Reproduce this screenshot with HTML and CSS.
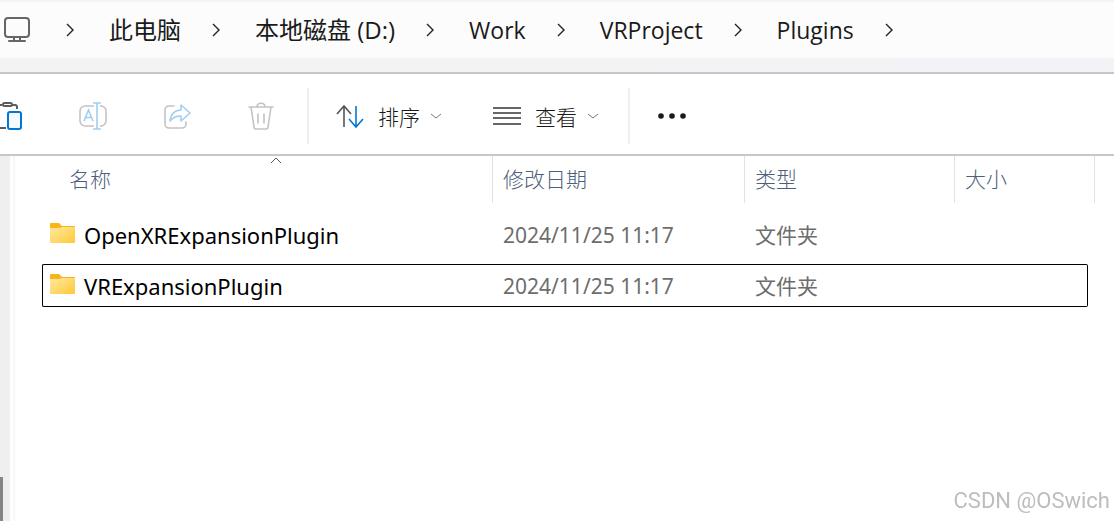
FILE: index.html
```html
<!DOCTYPE html>
<html lang="zh-CN">
<head>
    <meta charset="UTF-8">
    <meta name="viewport" content="width=device-width, initial-scale=1.0">
    <title>Plugins</title>
    <link rel="stylesheet" href="styles.css">
</head>
<body>
    <header>
        <nav class="breadcrumb" aria-label="Path">
            <svg class="pc" viewBox="0 0 28 28" fill="none" stroke="#666" stroke-width="2" stroke-linecap="round">
                <rect x="1" y="2" width="24" height="19" rx="3"/>
                <path d="M10 22v3M16 22v3M5 25h16"/>
            </svg>
            <svg class="sep" viewBox="0 0 8 14"><path d="M1 1l6 6-6 6"/></svg>
            <a href="#">此电脑</a>
            <svg class="sep" viewBox="0 0 8 14"><path d="M1 1l6 6-6 6"/></svg>
            <a href="#">本地磁盘 (D:)</a>
            <svg class="sep" viewBox="0 0 8 14"><path d="M1 1l6 6-6 6"/></svg>
            <a href="#" class="latin">Work</a>
            <svg class="sep" viewBox="0 0 8 14"><path d="M1 1l6 6-6 6"/></svg>
            <a href="#" class="latin">VRProject</a>
            <svg class="sep" viewBox="0 0 8 14"><path d="M1 1l6 6-6 6"/></svg>
            <a href="#" class="latin">Plugins</a>
            <svg class="sep" viewBox="0 0 8 14"><path d="M1 1l6 6-6 6"/></svg>
        </nav>
    </header>

    <div class="toolbar">
        <div class="actions">
            <button aria-label="粘贴">
                <svg viewBox="0 0 28 28" fill="none" stroke="#5c5c5c" stroke-width="2">
                    <path d="M7 3H3a2 2 0 0 0-2 2v19a2 2 0 0 0 2 2h8M17 3h3q2 0 2 2v2"/>
                    <rect x="8" y="1" width="9" height="3" rx="1.5"/>
                    <rect x="13" y="10" width="13" height="17" rx="2" fill="#f6fafd" stroke="#0078d4"/>
                </svg>
            </button>
            <button aria-label="重命名" disabled>
                <svg viewBox="0 0 28 28" fill="none" stroke="#c3c3c3" stroke-width="1.6">
                    <path d="M15 4H6a5 5 0 0 0-5 5v10a5 5 0 0 0 5 5h9M21 4h1a5 5 0 0 1 5 5v10a5 5 0 0 1-5 5h-1"/>
                    <path stroke="#a0cff2" d="M14 1h8M18 1v26M14 27h8M5 19l4.500-11 4.500 11M6.500 15.500h6"/>
                </svg>
            </button>
            <button aria-label="共享" disabled>
                <svg viewBox="0 0 28 28" fill="none" stroke="#c3c3c3" stroke-width="1.600" stroke-linejoin="round" stroke-linecap="round">
                    <path d="M11 4H6a4 4 0 0 0-4 4v14a4 4 0 0 0 4 4h13a4 4 0 0 0 4-4v-2"/>
                    <path stroke="#a0cff2" d="M18 3l9 8-9 8v-5c-5 0-8 1-11 5 1-7 4-11 11-11z"/>
                </svg>
            </button>
            <button aria-label="删除" disabled>
                <svg viewBox="0 0 28 28" fill="none" stroke="#c3c3c3" stroke-width="1.600" stroke-linecap="round">
                    <path d="M2 5h24M10 5c0-5 8-5 8 0M4 5l3 20a2 2 0 0 0 2 2h10a2 2 0 0 0 2-2l3-20M11 12v9M17 12v9"/>
                </svg>
            </button>
        </div>
        <div class="menus">
            <button class="menu">
                <svg viewBox="0 0 28 28" fill="none" stroke="#555" stroke-width="1.600">
                    <path d="M8 25V4M1 12l7-8 7 8"/>
                    <path stroke="#0078d4" d="M20 4v21M13 17l7 8 7-8"/>
                </svg>
                <span>排序</span>
                <svg class="arrow" viewBox="0 0 10 6"><path d="M0 1l5 4 5-4"/></svg>
            </button>
            <button class="menu">
                <svg viewBox="0 0 28 28" fill="none" stroke="#666" stroke-width="2">
                    <path d="M0 6h28M0 11h28M0 16h28M0 22h28"/>
                </svg>
                <span>查看</span>
                <svg class="arrow" viewBox="0 0 10 6"><path d="M0 1l5 4 5-4"/></svg>
            </button>
        </div>
        <button class="more" aria-label="更多">
            <svg viewBox="0 0 28 28" fill="#1a1a1a">
                <circle cx="3" cy="14" r="2.800"/><circle cx="14" cy="14" r="2.800"/><circle cx="25" cy="14" r="2.800"/>
            </svg>
        </button>
    </div>

    <main>
        <div class="scrollbar"><div class="thumb"></div></div>
        <div class="splitter"></div>
        <div class="files">
            <table>
                <thead>
                    <tr>
                        <th class="name">名称<svg class="sorted" viewBox="0 0 12 7"><path d="M1 6l5-5 5 5"/></svg></th>
                        <th class="date">修改日期</th>
                        <th class="type">类型</th>
                        <th class="size">大小</th>
                    </tr>
                </thead>
                <tbody>
                    <tr>
                        <td>
                            <div class="file">
                                <svg class="folder" viewBox="0 0 25 20">
                                    <path fill="#f9b517" d="M0 1a1 1 0 0 1 1-1h8l3 3h12a1 1 0 0 1 1 1v4H0z"/>
                                    <path fill="url(#folder)" d="M0 5h9l3-1h13v15a1 1 0 0 1-1 1H1a1 1 0 0 1-1-1z"/>
                                    <defs>
                                        <linearGradient id="folder" x1="0" y1="0" x2="1" y2="1">
                                            <stop offset="0" stop-color="#ffe9a0"/>
                                            <stop offset="1" stop-color="#ffc938"/>
                                        </linearGradient>
                                    </defs>
                                </svg>
                                OpenXRExpansionPlugin
                            </div>
                        </td>
                        <td>2024/11/25 11:17</td>
                        <td>文件夹</td>
                        <td></td>
                    </tr>
                    <tr class="focused">
                        <td>
                            <div class="file">
                                <svg class="folder" viewBox="0 0 25 20">
                                    <path fill="#f9b517" d="M0 1a1 1 0 0 1 1-1h8l3 3h12a1 1 0 0 1 1 1v4H0z"/>
                                    <path fill="url(#folder)" d="M0 5h9l3-1h13v15a1 1 0 0 1-1 1H1a1 1 0 0 1-1-1z"/>
                                </svg>
                                VRExpansionPlugin
                            </div>
                        </td>
                        <td>2024/11/25 11:17</td>
                        <td>文件夹</td>
                        <td></td>
                    </tr>
                </tbody>
            </table>
        </div>
    </main>

    <div class="watermark">CSDN @OSwich</div>
</body>
</html>
```

FILE: styles.css
```css
* {
    box-sizing: border-box;
}

body {
    display: flex;
    flex-direction: column;
    min-height: 100vh;
    margin: 0;
    background-color: #fff;
    color: #1a1a1a;
    font-family: "Noto Sans", "Noto Sans CJK SC", sans-serif;
    font-size: 21px;
}

svg {
    display: block;
    flex: none;
}

header {
    padding: 2px 0 14px;
    background: linear-gradient(to right, #f3f3f3 40%, #f2f3f7);
    border-bottom: 2px solid #c8c8cc;
}

.breadcrumb {
    display: flex;
    align-items: center;
    height: 56px;
    padding-left: 4px;
    background-color: #fcfcfc;
    white-space: nowrap;
}

.breadcrumb a {
    margin: 0 31px 0 35px;
    color: #1a1a1a;
    font-family: "Open Sans", "Noto Sans CJK SC", sans-serif;
    font-size: 24px;
    line-height: 36px;
    text-decoration: none;
}

.breadcrumb .latin {
    font-size: 23px;
}

.pc {
    width: 28px;
    height: 28px;
    margin-right: 34px;
}

.sep {
    width: 8px;
    height: 14px;
    fill: none;
    stroke: #222;
    stroke-width: 1.4;
}

.toolbar {
    display: flex;
    align-items: center;
    height: 82px;
    padding-top: 4px;
    border-bottom: 2px solid #c8c8cc;
}

.toolbar button {
    padding: 0;
    background: none;
    border: none;
    color: #1a1a1a;
    font: inherit;
    font-weight: 300;
}

.toolbar button svg {
    width: 28px;
    height: 28px;
}

.actions {
    display: flex;
    gap: 56px;
    margin-left: -5px;
    padding-right: 32px;
}

.menus {
    display: flex;
    align-items: center;
    gap: 52px;
    height: 56px;
    padding: 0 30px 0 27px;
    border-left: 2px solid #efefef;
    border-right: 2px solid #efefef;
}

.menu {
    display: flex;
    align-items: center;
}

.menu span {
    margin: 0 11px 0 14px;
}

.toolbar .menu .arrow {
    width: 10px;
    height: 6px;
    fill: none;
    stroke: #777;
}

.more {
    margin-left: 28px;
}

main {
    display: flex;
    flex: 1;
}

.scrollbar {
    display: flex;
    align-items: flex-end;
    width: 10px;
    background-color: #efefef;
}

.thumb {
    width: 3px;
    height: 12%;
    background-color: #858585;
}

.splitter {
    width: 5px;
    border-right: 2px solid #f7f7f7;
}

.files {
    flex: 1;
    padding: 0 26px 0 27px;
}

table {
    width: 100%;
    margin-top: -8px;
    table-layout: fixed;
    border-spacing: 0 8px;
    line-height: 30px;
}

th {
    position: relative;
    height: 49px;
    padding: 0 11px 4px;
    color: #4c607a;
    font-weight: 300;
    text-align: left;
}

/* column dividers */
th::after {
    content: "";
    position: absolute;
    top: 0;
    right: -1px;
    bottom: 2px;
    border-right: 1px solid #e2e2e2;
}

.name {
    width: 450px;
    padding-left: 27px;
}

.date {
    width: 252px;
}

.type {
    width: 210px;
}

.size::after {
    right: -7px;
}

.sorted {
    position: absolute;
    top: 1px;
    left: 228px;
    width: 12px;
    height: 7px;
    fill: none;
    stroke: #555;
}

td {
    height: 43px;
    padding: 0 11px;
    border: 1px solid transparent;
    border-width: 1px 0;
    color: #6d6d6d;
}

td:first-child {
    padding-left: 7px;
    border-left-width: 1px;
    border-radius: 2px 0 0 2px;
    color: #000;
    font-size: 22px;
}

td:last-child {
    border-right-width: 1px;
    border-radius: 0 2px 2px 0;
}

.focused td {
    border-color: #000;
}

.file {
    display: flex;
    align-items: center;
    gap: 9px;
}

.folder {
    width: 25px;
    height: 20px;
    margin-bottom: 4px;
}

.watermark {
    position: fixed;
    right: 4px;
    bottom: 4px;
    color: #bdbdbd;
    font-family: Roboto, sans-serif;
    font-size: 22px;
    line-height: 32px;
}
```
